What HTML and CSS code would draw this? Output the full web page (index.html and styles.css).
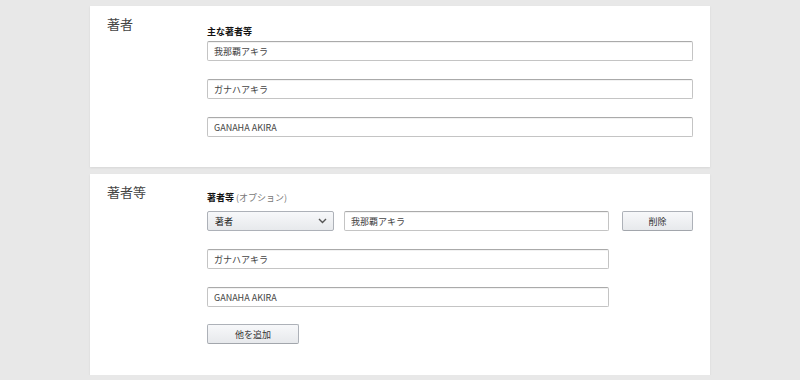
FILE: index.html
```html
<!DOCTYPE html>
<html>

<head>
    <meta name="viewport" content="width=device-width, initial-scale=1">
    <title>著者</title>
    <link rel="stylesheet" href="styles.css">
</head>

<body>
    <div class="card card-main">
        <div class="section-label">著者</div>
        <div class="section-body">
            <div class="field-label">主な著者等</div>
            <input class="text-input full" type="text" value="我那覇アキラ">
            <input class="text-input full" type="text" value="ガナハアキラ">
            <input class="text-input full" type="text" value="GANAHA AKIRA">
        </div>
    </div>

    <div class="card card-other">
        <div class="section-label">著者等</div>
        <div class="section-body">
            <div class="field-label">著者等 <span class="optional">(オプション)</span></div>
            <div class="row">
                <div class="select">
                    <span>著者</span>
                    <svg width="9" height="6" viewBox="0 0 9 6">
                        <path d="M1 1 L4.5 4.5 L8 1" fill="none" stroke="#555" stroke-width="1.4"/>
                    </svg>
                </div>
                <input class="text-input name" type="text" value="我那覇アキラ">
                <button class="btn btn-remove">削除</button>
            </div>
            <input class="text-input wide" type="text" value="ガナハアキラ">
            <input class="text-input wide" type="text" value="GANAHA AKIRA">
            <button class="btn btn-add">他を追加</button>
        </div>
    </div>
</body>

</html>
```

FILE: styles.css
```css
body {
    font-family: "Noto Sans CJK JP", "Liberation Sans", sans-serif;
    margin: 0;
    padding: 6px 0 0 0;
    background-color: #e8e8e8;
    color: #333;
}

.card {
    width: 620px;
    margin: 0 auto;
    box-sizing: border-box;
    background-color: #fff;
    display: grid;
    grid-template-columns: 117px 486px;
    padding: 10px 0 30px 0;
    box-shadow: 0 1px 2px rgba(0, 0, 0, 0.08);
}

.card-main {
    height: 161px;
}

.card-other {
    margin-top: 7px;
    height: 201px;
}

.section-label {
    padding-left: 17px;
    font-size: 13px;
    line-height: 16px;
    color: #444;
}

.section-body {
    display: flex;
    flex-direction: column;
    align-items: flex-start;
}

.card-main .section-body {
    padding-top: 10px;
}

.card-other .section-body {
    padding-top: 8px;
}

.field-label {
    font-size: 9px;
    font-weight: bold;
    line-height: 12px;
    color: #111;
}

.card-main .field-label {
    margin-bottom: 3px;
}

.card-other .field-label {
    margin-bottom: 7px;
}

.optional {
    font-weight: normal;
    color: #777;
}

.text-input {
    box-sizing: border-box;
    height: 20px;
    padding: 0 6px;
    margin: 0 0 18px 0;
    border: 1px solid #c4c4c4;
    border-top-color: #aaa;
    border-radius: 2px;
    box-shadow: 0 1px 0 rgba(0, 0, 0, 0.05) inset;
    font-family: "Noto Sans CJK JP", "Liberation Sans", sans-serif;
    font-size: 9px;
    color: #444;
    background-color: #fff;
}

.text-input.full {
    width: 486px;
}

.text-input.wide {
    width: 402px;
}

.row {
    display: flex;
    align-items: center;
    margin-bottom: 18px;
}

.row .text-input {
    margin: 0;
}

.text-input.name {
    width: 265px;
    margin-left: 10px;
}

.select {
    box-sizing: border-box;
    width: 127px;
    height: 20px;
    display: flex;
    align-items: center;
    justify-content: space-between;
    padding: 0 6px 0 7px;
    border: 1px solid #adb1b8;
    border-radius: 2px;
    background: linear-gradient(#f7f8fa, #e7e9ec);
    font-size: 9px;
    color: #222;
}

.btn {
    box-sizing: border-box;
    height: 20px;
    border: 1px solid #adb1b8;
    border-bottom-color: #a2a6ac;
    border-radius: 2px;
    background: linear-gradient(#f7f8fa, #e7e9ec);
    font-family: "Noto Sans CJK JP", "Liberation Sans", sans-serif;
    font-size: 9px;
    color: #333;
    padding: 0;
    cursor: pointer;
}

.btn-remove {
    width: 71px;
    margin-left: 13px;
}

.btn-add {
    width: 92px;
    margin-top: -1px;
}
```
